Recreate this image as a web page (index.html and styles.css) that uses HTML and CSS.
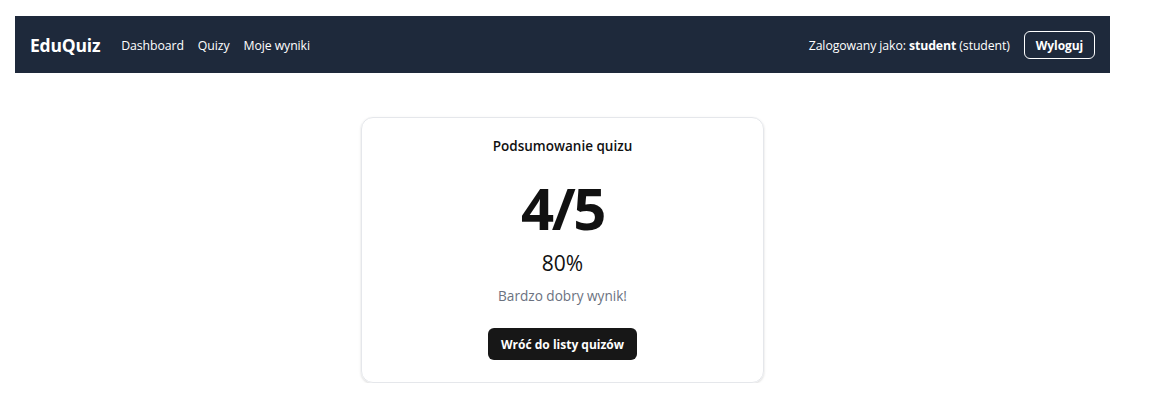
FILE: index.html
```html
<!DOCTYPE html>
<html lang="pl">
<head>
<meta charset="utf-8">
<title>EduQuiz</title>
<link rel="stylesheet" href="styles.css">
</head>
<body>
<div class="page">
  <nav class="navbar">
    <div class="nav-left">
      <span class="brand">EduQuiz</span>
      <a class="nav-link" href="#">Dashboard</a>
      <a class="nav-link" href="#">Quizy</a>
      <a class="nav-link" href="#">Moje wyniki</a>
    </div>
    <div class="nav-right">
      <span class="user">Zalogowany jako: <strong>student</strong> (student)</span>
      <button class="logout">Wyloguj</button>
    </div>
  </nav>
  <main class="main">
    <section class="card">
      <h2 class="card-title">Podsumowanie quizu</h2>
      <div class="score">4/5</div>
      <div class="percent">80%</div>
      <p class="message">Bardzo dobry wynik!</p>
      <button class="back">Wróć do listy quizów</button>
    </section>
  </main>
</div>
</body>
</html>
```
FILE: styles.css
```css
* { box-sizing: border-box; }
html, body { margin: 0; padding: 0; background: #fff; }
body {
  font-family: "Open Sans", "Noto Sans", "Liberation Sans", sans-serif;
  color: #111;
}
.page {
  width: 1095px;
  margin: 16px 0 0 15px;
}
.navbar {
  height: 57px;
  background: #1e293b;
  display: flex;
  align-items: center;
  justify-content: space-between;
  padding: 1px 15px 0;
  color: #fff;
}
.nav-left { display: flex; align-items: center; gap: 14px; }
.brand { font-size: 17.5px; font-weight: 700; margin-right: 7px; letter-spacing: -0.2px; }
.nav-link { color: #fff; text-decoration: none; font-size: 12.3px; letter-spacing: -0.1px; }
.nav-right { display: flex; align-items: center; gap: 14px; }
.user { font-size: 12.3px; letter-spacing: -0.1px; }
.user strong { font-weight: 700; }
.logout {
  font-family: inherit;
  background: transparent;
  color: #fff;
  border: 1px solid #fff;
  border-radius: 6px;
  height: 28px;
  padding: 0 11px;
  font-size: 12px;
  letter-spacing: -0.1px;
  font-weight: 700;
}
.main {
  display: flex;
  justify-content: center;
  padding-top: 44px;
}
.card {
  width: 403px;
  border: 1px solid #e5e7eb;
  border-radius: 12px;
  box-shadow: 0 1px 3px rgba(0,0,0,0.1), 0 1px 2px rgba(0,0,0,0.06);
  padding: 18px 24px 22px;
  display: flex;
  flex-direction: column;
  align-items: center;
}
.card-title { margin: 0; font-size: 13.5px; font-weight: 600; line-height: 20px; color: #111; }
.score { margin-top: 16px; font-size: 58px; font-weight: 700; line-height: 72px; letter-spacing: -2.5px; color: #111; }
.percent { font-size: 21px; line-height: 30px; margin-top: 4px; color: #111; }
.message { margin: 8px 0 0; font-size: 13.6px; line-height: 20px; color: #6b7280; }
.back {
  margin-top: 22px;
  font-family: inherit;
  background: #171717;
  color: #fff;
  border: none;
  border-radius: 6px;
  height: 32px;
  padding: 0 13px;
  font-size: 12px;
  font-weight: 700;
}
```
